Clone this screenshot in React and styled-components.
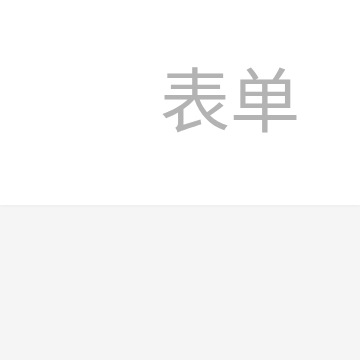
import React from "react";
import styled, { createGlobalStyle } from "styled-components";

const Global = createGlobalStyle`
  html, body { margin: 0; padding: 0; background: #f5f5f5; }
  #root { width: 360px; height: 360px; }
`;

const Page = styled.div`
  width: 360px;
  height: 360px;
  display: flex;
  flex-direction: column;
  background: #f5f5f5;
`;

const Header = styled.header`
  height: 205px;
  background: #ffffff;
  box-shadow: 0 1px 3px rgba(0, 0, 0, 0.04);
  display: flex;
  justify-content: flex-end;
  align-items: flex-start;
  padding: 0 60px 0 0;
  box-sizing: border-box;
`;

const Title = styled.h1`
  margin: 50px 0 0 0;
  font-family: "Noto Sans CJK SC", "Noto Sans", sans-serif;
  font-weight: 400;
  font-size: 70px;
  line-height: 94px;
  color: #b3b3b3;
`;

export default function App() {
  return (
    <>
      <Global />
      <Page>
        <Header>
          <Title>表单</Title>
        </Header>
      </Page>
    </>
  );
}
